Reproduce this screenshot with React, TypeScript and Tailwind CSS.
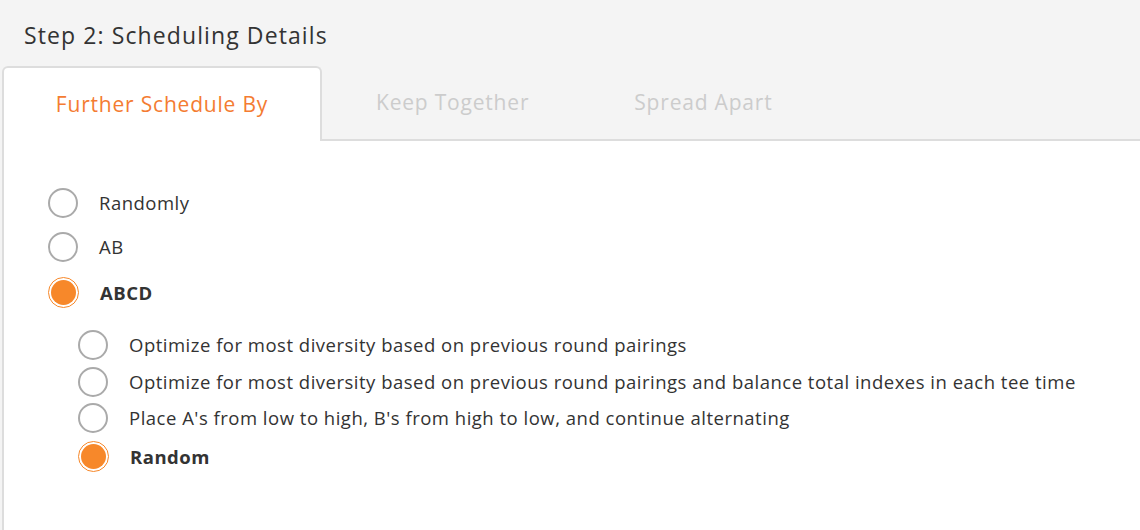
import React from "react";

function Radio({ checked }: { checked?: boolean }) {
  if (checked) {
    return (
      <span className="flex h-[31px] w-[31px] shrink-0 items-center justify-center rounded-full border-[1.5px] border-[#f7882a] bg-white">
        <span className="h-[25px] w-[25px] rounded-full bg-[#f7882a]" />
      </span>
    );
  }
  return <span className="h-[30px] w-[30px] shrink-0 rounded-full border-2 border-[#aaaaaa] bg-white" />;
}

function Option({ label, checked, className }: { label: string; checked?: boolean; className?: string }) {
  return (
    <div className={"flex items-center " + (className ?? "")}>
      <Radio checked={checked} />
      <span
        className={
          "ml-[21px] text-[18.5px] leading-[24px] tracking-[0.5px] text-[#333] " + (checked ? "font-bold" : "")
        }
      >
        {label}
      </span>
    </div>
  );
}

export default function App() {
  return (
    <div className="h-[530px] w-[1140px] overflow-hidden bg-[#f4f4f4]" style={{ fontFamily: "'Open Sans', sans-serif" }}>
      <div className="px-[24px] pt-[19px] text-[23px] leading-[32px] tracking-[1.1px] text-[#333]">
        Step 2: Scheduling Details
      </div>
      <div className="mt-[15px] flex items-end">
        <div className="ml-[2px] flex h-[75px] w-[320px] items-center justify-center rounded-t-[6px] border-x-2 border-t-2 border-[#dddddd] bg-white pt-[1px] text-[21px] tracking-[0.8px] text-[#f47c32]">
          Further Schedule By
        </div>
        <div className="flex h-[73px] flex-1 items-center border-b-2 border-[#dddddd] pb-[2px] text-[21px] tracking-[0.8px] text-[#cccccc]">
          <span className="ml-[54px]">Keep Together</span>
          <span className="ml-[105px]">Spread Apart</span>
        </div>
      </div>
      <div className="ml-[2px] h-[400px] border-l-2 border-[#dddddd] bg-white pl-[44px] pt-[47px]">
        <Option label="Randomly" />
        <Option label="AB" className="mt-[14px]" />
        <Option label="ABCD" checked className="mt-[15px]" />
        <div className="pl-[30px]">
          <Option label="Optimize for most diversity based on previous round pairings" className="mt-[22px]" />
          <Option
            label="Optimize for most diversity based on previous round pairings and balance total indexes in each tee time"
            className="mt-[7px]"
          />
          <Option label="Place A's from low to high, B's from high to low, and continue alternating" className="mt-[6px]" />
          <Option label="Random" checked className="mt-[8px]" />
        </div>
      </div>
    </div>
  );
}
